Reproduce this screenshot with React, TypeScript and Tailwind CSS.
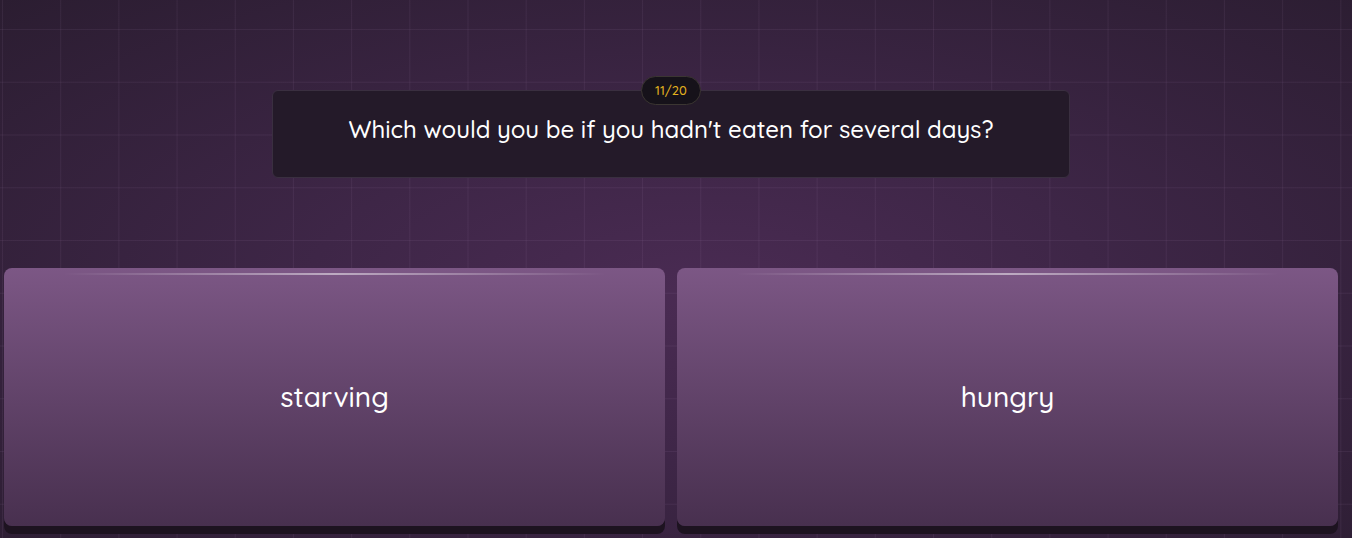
import React from "react";

const font = { fontFamily: '"Quicksand", "Lato", "Noto Sans", sans-serif' };

function Choice({ label }: { label: string }) {
  return (
    <button
      type="button"
      className="relative flex h-[258px] items-center justify-center rounded-[8px] bg-gradient-to-b from-[#7c5785] to-[#48304f] text-[28px] font-medium text-white shadow-[0_8px_0_#1d1320]"
    >
      <span className="pointer-events-none absolute left-[9%] right-[9%] top-[5px] h-[2px] bg-gradient-to-r from-transparent via-white/50 to-transparent" />
      <span>{label}</span>
    </button>
  );
}

export default function App() {
  return (
    <div
      className="relative h-[538px] w-full overflow-hidden bg-[radial-gradient(ellipse_at_52%_55%,#4a2b53_0%,#3e2647_40%,#2b1d31_100%)]"
      style={font}
    >
      {/* faint grid over the backdrop */}
      <div className="pointer-events-none absolute inset-0 bg-[linear-gradient(to_right,rgba(200,160,210,0.08)_1px,transparent_1px),linear-gradient(to_bottom,rgba(200,160,210,0.08)_1px,transparent_1px)] bg-[length:58.2px_52.75px] bg-[position:2px_29px]" />

      <div className="relative flex flex-col pl-[4px] pr-[14px] pt-[90px]">
        <div className="relative mx-auto flex h-[88px] w-[798px] justify-center rounded-[6px] border border-[#3a2f40] bg-[#241a29] pt-[22px]">
          <div className="absolute left-1/2 top-[-15px] flex h-[29px] w-[60px] -translate-x-1/2 items-center justify-center rounded-full border border-[#3b3632] bg-[#16121a] text-[13px] font-medium text-[#e3b21f]">
            11/20
          </div>
          <p className="text-[24px] font-medium leading-[32px] text-white">
            Which would you be if you hadn't eaten for several days?
          </p>
        </div>

        <div className="mt-[90px] grid grid-cols-2 gap-[12px]">
          <Choice label="starving" />
          <Choice label="hungry" />
        </div>
      </div>
    </div>
  );
}
